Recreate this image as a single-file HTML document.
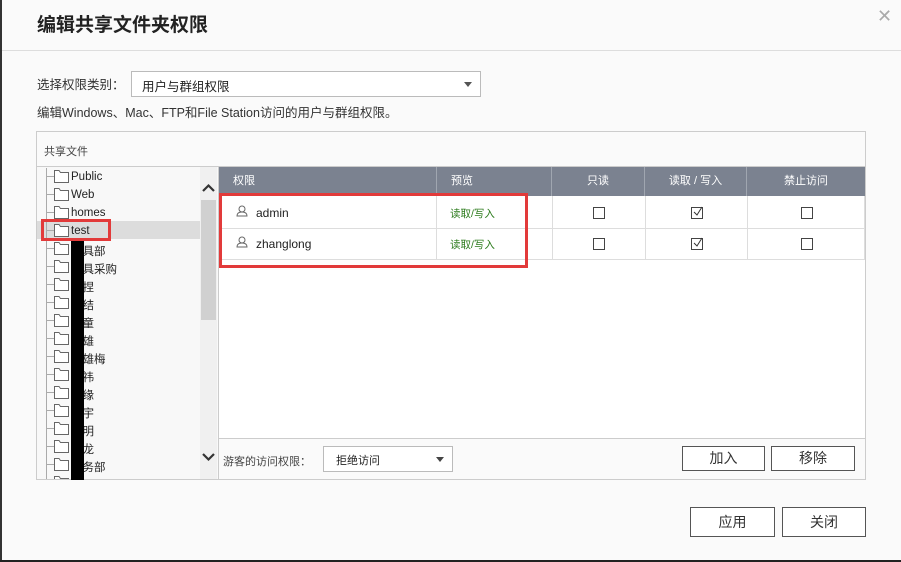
<!DOCTYPE html>
<html><head><meta charset="utf-8"><style>
*{margin:0;padding:0;box-sizing:border-box}
body{width:901px;height:562px;background:#fafafa;position:relative;overflow:hidden;font-family:"Liberation Sans","Noto Sans CJK SC",sans-serif;color:#222}
.a{position:absolute}
.t{font-size:12px;white-space:nowrap}
.btn{position:absolute;border:1px solid #555;background:#fff;font-size:14px;text-align:center;color:#333}
.cb{position:absolute;width:12px;height:12px;border:1px solid #444;background:#fff}
.hd{position:absolute;top:167px;height:29px;line-height:29px;color:#fff;font-size:11px;border-right:1px solid #a0a6b0}
.row{position:absolute;left:0;top:0;width:901px;height:562px;clip-path:inset(167px 0 83px 0)}
.row .tn{position:absolute;left:71px;font-size:11.5px;color:#222;white-space:nowrap}
</style></head><body>
<div class="a" style="left:0;top:0;width:2px;height:562px;background:#333"></div>
<div class="a" style="left:0;top:560px;width:901px;height:2px;background:#222"></div>
<div class="a" style="left:37px;top:10px;font-size:19px;font-weight:bold;color:#222">编辑共享文件夹权限</div>
<div class="a" style="left:877px;top:6px;font-size:18px;color:#aaa">✕</div>
<div class="a" style="left:2px;top:50px;width:899px;height:1px;background:#ddd"></div>
<div class="a t" style="left:37px;top:74px;font-size:12.5px;color:#333">选择权限类别：</div>
<div class="a" style="left:131px;top:71px;width:350px;height:26px;border:1px solid #bbb;background:#fff"></div>
<div class="a t" style="left:142px;top:76px;font-size:12.5px">用户与群组权限</div>
<div class="a" style="left:464px;top:82px;border-left:4px solid transparent;border-right:4px solid transparent;border-top:5px solid #555"></div>
<div class="a t" style="left:37px;top:102px;font-size:12.5px;color:#333">编辑Windows、Mac、FTP和File Station访问的用户与群组权限。</div>

<div class="a" style="left:36px;top:131px;width:830px;height:349px;border:1px solid #ccc;background:#fafafa"></div>
<div class="a t" style="left:44px;top:143px;font-size:11px;color:#444">共享文件</div>
<div class="a" style="left:37px;top:166px;width:828px;height:1px;background:#ccc"></div>
<div class="a" style="left:37px;top:167px;width:181px;height:312px;background:#f8f8f8"></div>
<div class="a" style="left:37px;top:221px;width:163px;height:18px;background:#dcdcdc"></div>
<div class="a" style="left:46px;top:168px;width:1px;height:311px;background:#aaa"></div>
<div class="a" style="left:200px;top:167px;width:17px;height:312px;background:#f0f0f0"></div>
<div class="a" style="left:201px;top:200px;width:15px;height:120px;background:#d0d0d0"></div>
<svg class="a" style="left:201px;top:182px" width="15" height="12"><path d="M2 9 L7.5 3.5 L13 9" stroke="#333" stroke-width="2.2" fill="none"/></svg>
<svg class="a" style="left:201px;top:451px" width="15" height="12"><path d="M2 3 L7.5 8.5 L13 3" stroke="#333" stroke-width="2.2" fill="none"/></svg>
<div class="row">
<svg class="a" style="left:46px;top:167px" width="24" height="315">
<g stroke="#666" fill="#fff" stroke-width="1">
<g id="f"><path d="M0 9.5 H8" fill="none" stroke="#aaa"/><path d="M8.5 3.5 H13 L14.5 5.5 H22.5 V15.5 H8.5 Z"/></g>
<use href="#f" y="18"/><use href="#f" y="36"/><use href="#f" y="54"/><use href="#f" y="72"/><use href="#f" y="90"/><use href="#f" y="108"/><use href="#f" y="126"/><use href="#f" y="144"/><use href="#f" y="162"/><use href="#f" y="180"/><use href="#f" y="198"/><use href="#f" y="216"/><use href="#f" y="234"/><use href="#f" y="252"/><use href="#f" y="270"/><use href="#f" y="288"/><use href="#f" y="306"/>
</g></svg>
<div class="tn" style="top:171px">Public</div>
<div class="tn" style="top:189px">Web</div>
<div class="tn" style="top:207px">homes</div>
<div class="tn" style="top:225px">test</div>
<div class="tn" style="top:243px">工具部</div>
<div class="tn" style="top:261px">工具采购</div>
<div class="tn" style="top:279px">王捏</div>
<div class="tn" style="top:297px">王结</div>
<div class="tn" style="top:315px">王童</div>
<div class="tn" style="top:333px">王雄</div>
<div class="tn" style="top:351px">王雄梅</div>
<div class="tn" style="top:369px">王祎</div>
<div class="tn" style="top:387px">王缘</div>
<div class="tn" style="top:405px">王宇</div>
<div class="tn" style="top:423px">王明</div>
<div class="tn" style="top:441px">王龙</div>
<div class="tn" style="top:459px">财务部</div>
<div class="tn" style="top:477px">王长城</div>
</div>
<div class="a" style="left:71px;top:239px;width:13px;height:241px;background:#000"></div>
<div class="a" style="left:41px;top:219px;width:70px;height:22px;border:3px solid #e23a3a"></div>

<div class="a" style="left:219px;top:167px;width:646px;height:271px;background:#fff"></div>
<div class="a" style="left:219px;top:167px;width:646px;height:29px;background:#7b8290"></div>
<div class="hd t" style="left:219px;width:218px;padding-left:14px">权限</div>
<div class="hd t" style="left:437px;width:115px;padding-left:14px">预览</div>
<div class="hd t" style="left:552px;width:93px;text-align:center">只读</div>
<div class="hd t" style="left:645px;width:102px;text-align:center">读取 / 写入</div>
<div class="hd t" style="left:747px;width:118px;text-align:center;border:0">禁止访问</div>
<div class="a" style="left:219px;top:228px;width:646px;height:1px;background:#ddd"></div>
<div class="a" style="left:219px;top:259px;width:646px;height:1px;background:#ddd"></div>
<div class="a" style="left:436px;top:196px;width:1px;height:63px;background:#ddd"></div>
<div class="a" style="left:552px;top:196px;width:1px;height:63px;background:#ddd"></div>
<div class="a" style="left:645px;top:196px;width:1px;height:63px;background:#ddd"></div>
<div class="a" style="left:747px;top:196px;width:1px;height:63px;background:#ddd"></div>
<div class="a" style="left:864px;top:196px;width:1px;height:63px;background:#ddd"></div>
<svg class="a" style="left:236px;top:205px" width="12" height="12"><circle cx="6" cy="4" r="3" stroke="#666" fill="none"/><path d="M1 11 Q1 7 6 7 Q11 7 11 11 Z" stroke="#666" fill="none"/></svg>
<svg class="a" style="left:236px;top:236px" width="12" height="12"><circle cx="6" cy="4" r="3" stroke="#666" fill="none"/><path d="M1 11 Q1 7 6 7 Q11 7 11 11 Z" stroke="#666" fill="none"/></svg>
<div class="a t" style="left:256px;top:206px;font-size:12px">admin</div>
<div class="a t" style="left:256px;top:237px;font-size:12px">zhanglong</div>
<div class="a t" style="left:450px;top:206px;font-size:10.5px;color:#2a7a1a">读取/写入</div>
<div class="a t" style="left:450px;top:237px;font-size:10.5px;color:#2a7a1a">读取/写入</div>
<div class="cb" style="left:593px;top:207px"></div>
<div class="cb" style="left:691px;top:207px"></div>
<svg class="a" style="left:692px;top:206px" width="11" height="11"><path d="M2 6 L5 9 L10 1" stroke="#333" fill="none"/></svg>
<div class="cb" style="left:801px;top:207px"></div>
<div class="cb" style="left:593px;top:238px"></div>
<div class="cb" style="left:691px;top:238px"></div>
<svg class="a" style="left:692px;top:237px" width="11" height="11"><path d="M2 6 L5 9 L10 1" stroke="#333" fill="none"/></svg>
<div class="cb" style="left:801px;top:238px"></div>
<div class="a" style="left:219px;top:193px;width:309px;height:75px;border:3px solid #e23a3a"></div>

<div class="a" style="left:218px;top:438px;width:647px;height:1px;background:#ccc"></div>
<div class="a" style="left:218px;top:167px;width:1px;height:312px;background:#ccc"></div>
<div class="a t" style="left:223px;top:453px;font-size:11px;color:#444">游客的访问权限：</div>
<div class="a" style="left:323px;top:446px;width:130px;height:26px;border:1px solid #bbb;background:#fff"></div>
<div class="a t" style="left:336px;top:452px;font-size:11px">拒绝访问</div>
<div class="a" style="left:436px;top:457px;border-left:4px solid transparent;border-right:4px solid transparent;border-top:5px solid #444"></div>
<div class="btn" style="left:682px;top:446px;width:83px;height:25px;line-height:23px">加入</div>
<div class="btn" style="left:771px;top:446px;width:84px;height:25px;line-height:23px">移除</div>
<div class="btn" style="left:690px;top:507px;width:85px;height:30px;line-height:28px">应用</div>
<div class="btn" style="left:782px;top:507px;width:84px;height:30px;line-height:28px">关闭</div>
</body></html>
